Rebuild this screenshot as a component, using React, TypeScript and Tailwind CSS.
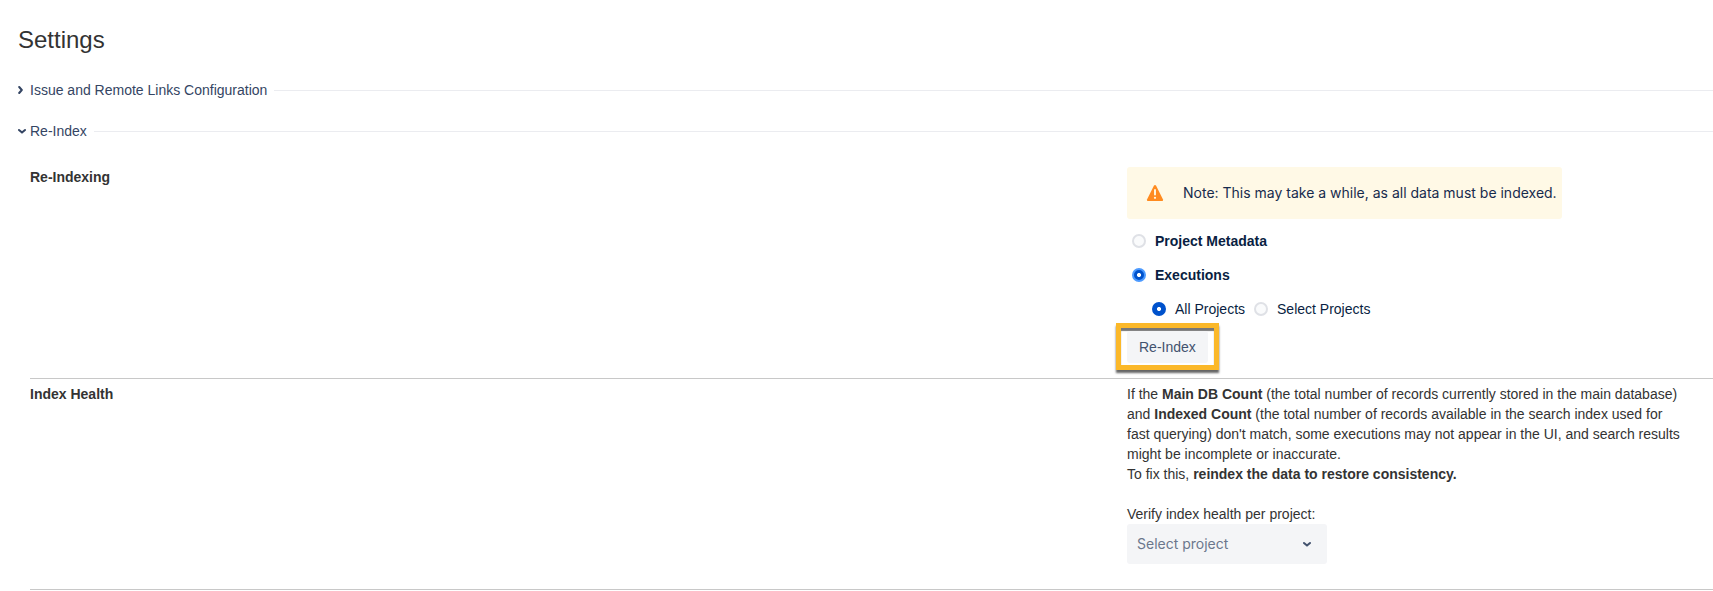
import { useState } from "react";

const radioBase =
  "m-0 size-3.5 shrink-0 appearance-none rounded-full border-2 outline-none border-[#dfe1e6] bg-[#fafbfc] checked:bg-[radial-gradient(circle,#ffffff_0_1.6px,#0052cc_2.4px)]";

function Chevron({ open = false }: { open?: boolean }) {
  return (
    <svg
      viewBox="0 0 8 8"
      className="size-2 shrink-0"
      fill="none"
      stroke="currentColor"
      strokeWidth="2"
      strokeLinecap="round"
      strokeLinejoin="round"
      aria-hidden="true"
    >
      {open ? <path d="M1 3 L4 5.6 L7 3" /> : <path d="M1.2 1 L3.8 4 L1.2 7" />}
    </svg>
  );
}

function SectionToggle({ title, open, onClick }: { title: string; open: boolean; onClick: () => void }) {
  return (
    <h2 className="flex h-5 items-center gap-[7px]">
      <button
        type="button"
        aria-expanded={open}
        onClick={onClick}
        className="flex items-center gap-1 text-[#344563]"
      >
        <Chevron open={open} />
        {title}
      </button>
      <span className="h-px flex-1 bg-[#ebecf0]" />
    </h2>
  );
}

function WarningIcon() {
  return (
    <svg viewBox="0 0 18 18" className="size-[18px] shrink-0" aria-hidden="true">
      <path
        d="M10 1.6 17 15.4 Q17.5 17 16 17 H2 Q0.5 17 1 15.4 L8 1.6 Q9 0.2 10 1.6Z"
        fill="#ff8b1f"
      />
      <path d="M9 6v4.6" stroke="#fffae6" strokeWidth="1.9" strokeLinecap="round" />
      <circle cx="9" cy="13.8" r="1.1" fill="#fffae6" />
    </svg>
  );
}

export default function App() {
  const [linksOpen, setLinksOpen] = useState(false);
  const [indexOpen, setIndexOpen] = useState(true);
  const [kind, setKind] = useState("executions");
  const [scope, setScope] = useState("all");

  return (
    <main className="bg-white pt-6 pl-[18px] font-['Liberation_Sans',Arial,sans-serif] text-sm leading-5 text-[#333333]">
      <h1 className="text-2xl leading-8">Settings</h1>
      <div className="mt-6 flex flex-col gap-[21px]">
        <SectionToggle
          title="Issue and Remote Links Configuration"
          open={linksOpen}
          onClick={() => setLinksOpen(!linksOpen)}
        />
        <SectionToggle title="Re-Index" open={indexOpen} onClick={() => setIndexOpen(!indexOpen)} />
      </div>

      {indexOpen && (
        <div className="mt-[26px] ml-3">
          <section className="grid grid-cols-[1097fr_586fr] border-b border-[#c8c8c8] pb-2">
            <h3 className="font-bold">Re-Indexing</h3>
            <div className="flex flex-col items-start text-[#172b4d]">
              <div className="flex h-[52px] items-center gap-[19px] rounded-[3px] bg-[#fff9e6] pr-[5px] pl-[19px]">
                <WarningIcon />
                <p className="font-['Inter',sans-serif]">
                  Note: This may take a while, as all data must be indexed.
                </p>
              </div>
              <div className="mt-3 flex flex-col gap-3.5 pl-[5px] text-[#091e42]">
                <label className="flex items-center gap-[9px] font-bold">
                  <input
                    type="radio"
                    name="kind"
                    className={radioBase + " checked:border-[#4c9aff]"}
                    checked={kind === "metadata"}
                    onChange={() => setKind("metadata")}
                  />
                  Project Metadata
                </label>
                <label className="flex items-center gap-[9px] font-bold">
                  <input
                    type="radio"
                    name="kind"
                    className={radioBase + " checked:border-[#4c9aff]"}
                    checked={kind === "executions"}
                    onChange={() => setKind("executions")}
                  />
                  Executions
                </label>
                <div className="flex gap-[9px] pl-5">
                  <label className="flex items-center gap-[9px]">
                    <input
                      type="radio"
                      name="scope"
                      className={radioBase + " checked:border-[#0052cc]"}
                      checked={scope === "all"}
                      onChange={() => setScope("all")}
                    />
                    All Projects
                  </label>
                  <label className="flex items-center gap-[9px]">
                    <input
                      type="radio"
                      name="scope"
                      className={radioBase + " checked:border-[#0052cc]"}
                      checked={scope === "select"}
                      onChange={() => setScope("select")}
                    />
                    Select Projects
                  </label>
                </div>
              </div>
              <div className="mt-1 -ml-[11px] border-[5px] border-[#fbb829] px-1.5 pt-[3px] pb-0.5 shadow-[0_3px_2px_#666666,inset_0_3px_1px_#777777]">
                <button type="button" className="h-8 rounded-[3px] bg-[#f4f5f7] px-3 text-[#42526e]">
                  Re-Index
                </button>
              </div>
            </div>
          </section>

          <section className="grid grid-cols-[1097fr_586fr] border-b border-[#c8c8c8] pt-[5px] pb-[25px]">
            <h3 className="font-bold">Index Health</h3>
            <div className="pr-7">
              <p>
                If the <b>Main DB Count</b> (the total number of records currently stored in the main database) and{" "}
                <b>Indexed Count</b> (the total number of records available in the search index used for fast
                querying) don't match, some executions may not appear in the UI, and search results might be
                incomplete or inaccurate.
              </p>
              <p>
                To fix this, <b>reindex the data to restore consistency.</b>
              </p>
              <label htmlFor="project" className="mt-5 block">
                Verify index health per project:
              </label>
              <div className="grid w-[200px] items-center">
                <select
                  id="project"
                  className="col-start-1 row-start-1 h-10 w-full appearance-none rounded-[3px] bg-[#f4f5f7] px-2.5 font-['Inter',sans-serif] text-[#6b778c]"
                >
                  <option>Select project</option>
                </select>
                <span className="pointer-events-none col-start-1 row-start-1 mr-4 justify-self-end text-[#42526e]">
                  <Chevron open />
                </span>
              </div>
            </div>
          </section>
        </div>
      )}
    </main>
  );
}
